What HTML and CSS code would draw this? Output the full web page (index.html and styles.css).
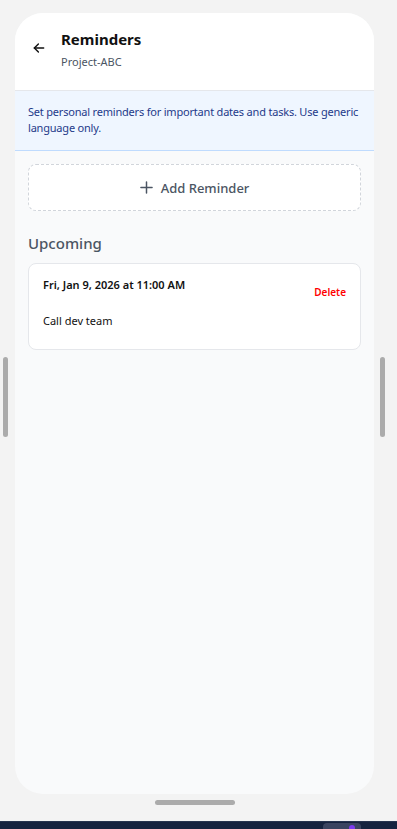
FILE: index.html
```html
<!DOCTYPE html>
<html>
<head>
<meta charset="utf-8">
<link rel="stylesheet" href="styles.css">
</head>
<body>
<div class="stage">
  <div class="rail rail-left"></div>
  <div class="phone">
    <header class="header">
      <button class="back" aria-label="Back">
        <svg width="14" height="14" viewBox="0 0 24 24" fill="none" stroke="#111" stroke-width="2.4" stroke-linecap="round" stroke-linejoin="round"><path d="M20 12H4"/><path d="M11 5l-7 7 7 7"/></svg>
      </button>
      <div class="titles">
        <div class="title">Reminders</div>
        <div class="subtitle">Project-ABC</div>
      </div>
    </header>
    <div class="banner">Set personal reminders for important dates and tasks. Use generic language only.</div>
    <main class="content">
      <button class="add">
        <svg width="13" height="13" viewBox="0 0 14 14" fill="none" stroke="#4b5563" stroke-width="1.6" stroke-linecap="round"><path d="M7 1v12M1 7h12"/></svg>
        <span>Add Reminder</span>
      </button>
      <h2 class="section">Upcoming</h2>
      <div class="card">
        <div class="card-top">
          <div class="date">Fri, Jan 9, 2026 at 11:00 AM</div>
          <button class="delete">Delete</button>
        </div>
        <div class="note">Call dev team</div>
      </div>
    </main>
  </div>
  <div class="rail rail-right"></div>
</div>
<div class="home"></div>
<div class="taskbar"><div class="tray"><span class="dot"></span></div></div>
</body>
</html>
```
FILE: styles.css
```css
* { box-sizing: border-box; }
html, body { margin: 0; padding: 0; }
body {
  width: 397px;
  height: 829px;
  background: #f3f3f3;
  font-family: "Noto Sans", "Open Sans", sans-serif;
  overflow: hidden;
  position: relative;
}
.stage {
  display: flex;
  align-items: center;
  padding-top: 13px;
  height: 794px;
}
.rail {
  width: 5px;
  height: 80px;
  background: #ababab;
  border-radius: 3px;
  align-self: flex-start;
  margin-top: 344px;
}
.rail-left { margin-left: 3px; margin-right: 7px; }
.rail-right { margin-left: 6px; }
.phone {
  width: 359px;
  height: 781px;
  border-radius: 28px;
  overflow: hidden;
  background: #f9fafb;
  display: flex;
  flex-direction: column;
}
.header {
  background: #fff;
  height: 78px;
  border-bottom: 1px solid #e5e7eb;
  display: flex;
  align-items: flex-start;
  padding: 16px 16px 0 16px;
}
.back {
  background: none;
  border: 0;
  padding: 0;
  margin: 12px 0 0 1px;
  width: 14px;
  height: 14px;
  display: flex;
}
.titles { margin-left: 15px; }
.title {
  font-size: 15px;
  font-weight: 700;
  color: #111;
  line-height: 20px;
}
.subtitle {
  font-size: 11px;
  color: #4b5563;
  line-height: 16px;
  margin-top: 5px;
}
.banner {
  background: #eff6ff;
  border-bottom: 1px solid #bfdbfe;
  color: #1e3a8a;
  font-size: 11px;
  letter-spacing: -0.2px;
  line-height: 16px;
  padding: 13px 12px 14px 13px;
  height: 60px;
}
.content {
  padding: 13px 13px;
  display: flex;
  flex-direction: column;
}
.add {
  height: 47px;
  background: #fff;
  border: 1px dashed #d1d5db;
  border-radius: 8px;
  display: flex;
  align-items: center;
  justify-content: center;
  gap: 8px;
  padding-left: 6px;
  font-family: inherit;
  font-size: 13px;
  font-weight: 500;
  color: #4b5563;
}
.section {
  margin: 22px 0 10px 0;
  font-size: 15px;
  font-weight: 500;
  color: #4b5563;
  line-height: 20px;
}
.card {
  background: #fff;
  border: 1px solid #e5e7eb;
  border-radius: 8px;
  padding: 13px 14px 18px 14px;
  height: 87px;
}
.card-top {
  display: flex;
  justify-content: space-between;
  align-items: flex-start;
}
.date {
  font-size: 11px;
  font-weight: 600;
  color: #111;
  line-height: 16px;
}
.delete {
  background: none;
  border: 0;
  padding: 0;
  margin-top: 8px;
  font-family: inherit;
  font-size: 10px;
  font-weight: 600;
  color: #ff0000;
  line-height: 14px;
}
.note {
  margin-top: 14px;
  font-size: 11px;
  color: #111;
  line-height: 16px;
}
.home {
  position: absolute;
  left: 155px;
  top: 800px;
  width: 80px;
  height: 5px;
  border-radius: 3px;
  background: #ababab;
}
.taskbar {
  position: absolute;
  left: 0;
  top: 821px;
  width: 397px;
  height: 8px;
  background: #15233f;
  border-top: 1px solid #26344f;
}
.tray {
  position: absolute;
  left: 323px;
  top: 1px;
  width: 38px;
  height: 10px;
  border-radius: 4px;
  background: #3a4460;
}
.dot {
  position: absolute;
  left: 26px;
  top: 2px;
  width: 6px;
  height: 6px;
  border-radius: 50%;
  background: #7c3aed;
}
```
